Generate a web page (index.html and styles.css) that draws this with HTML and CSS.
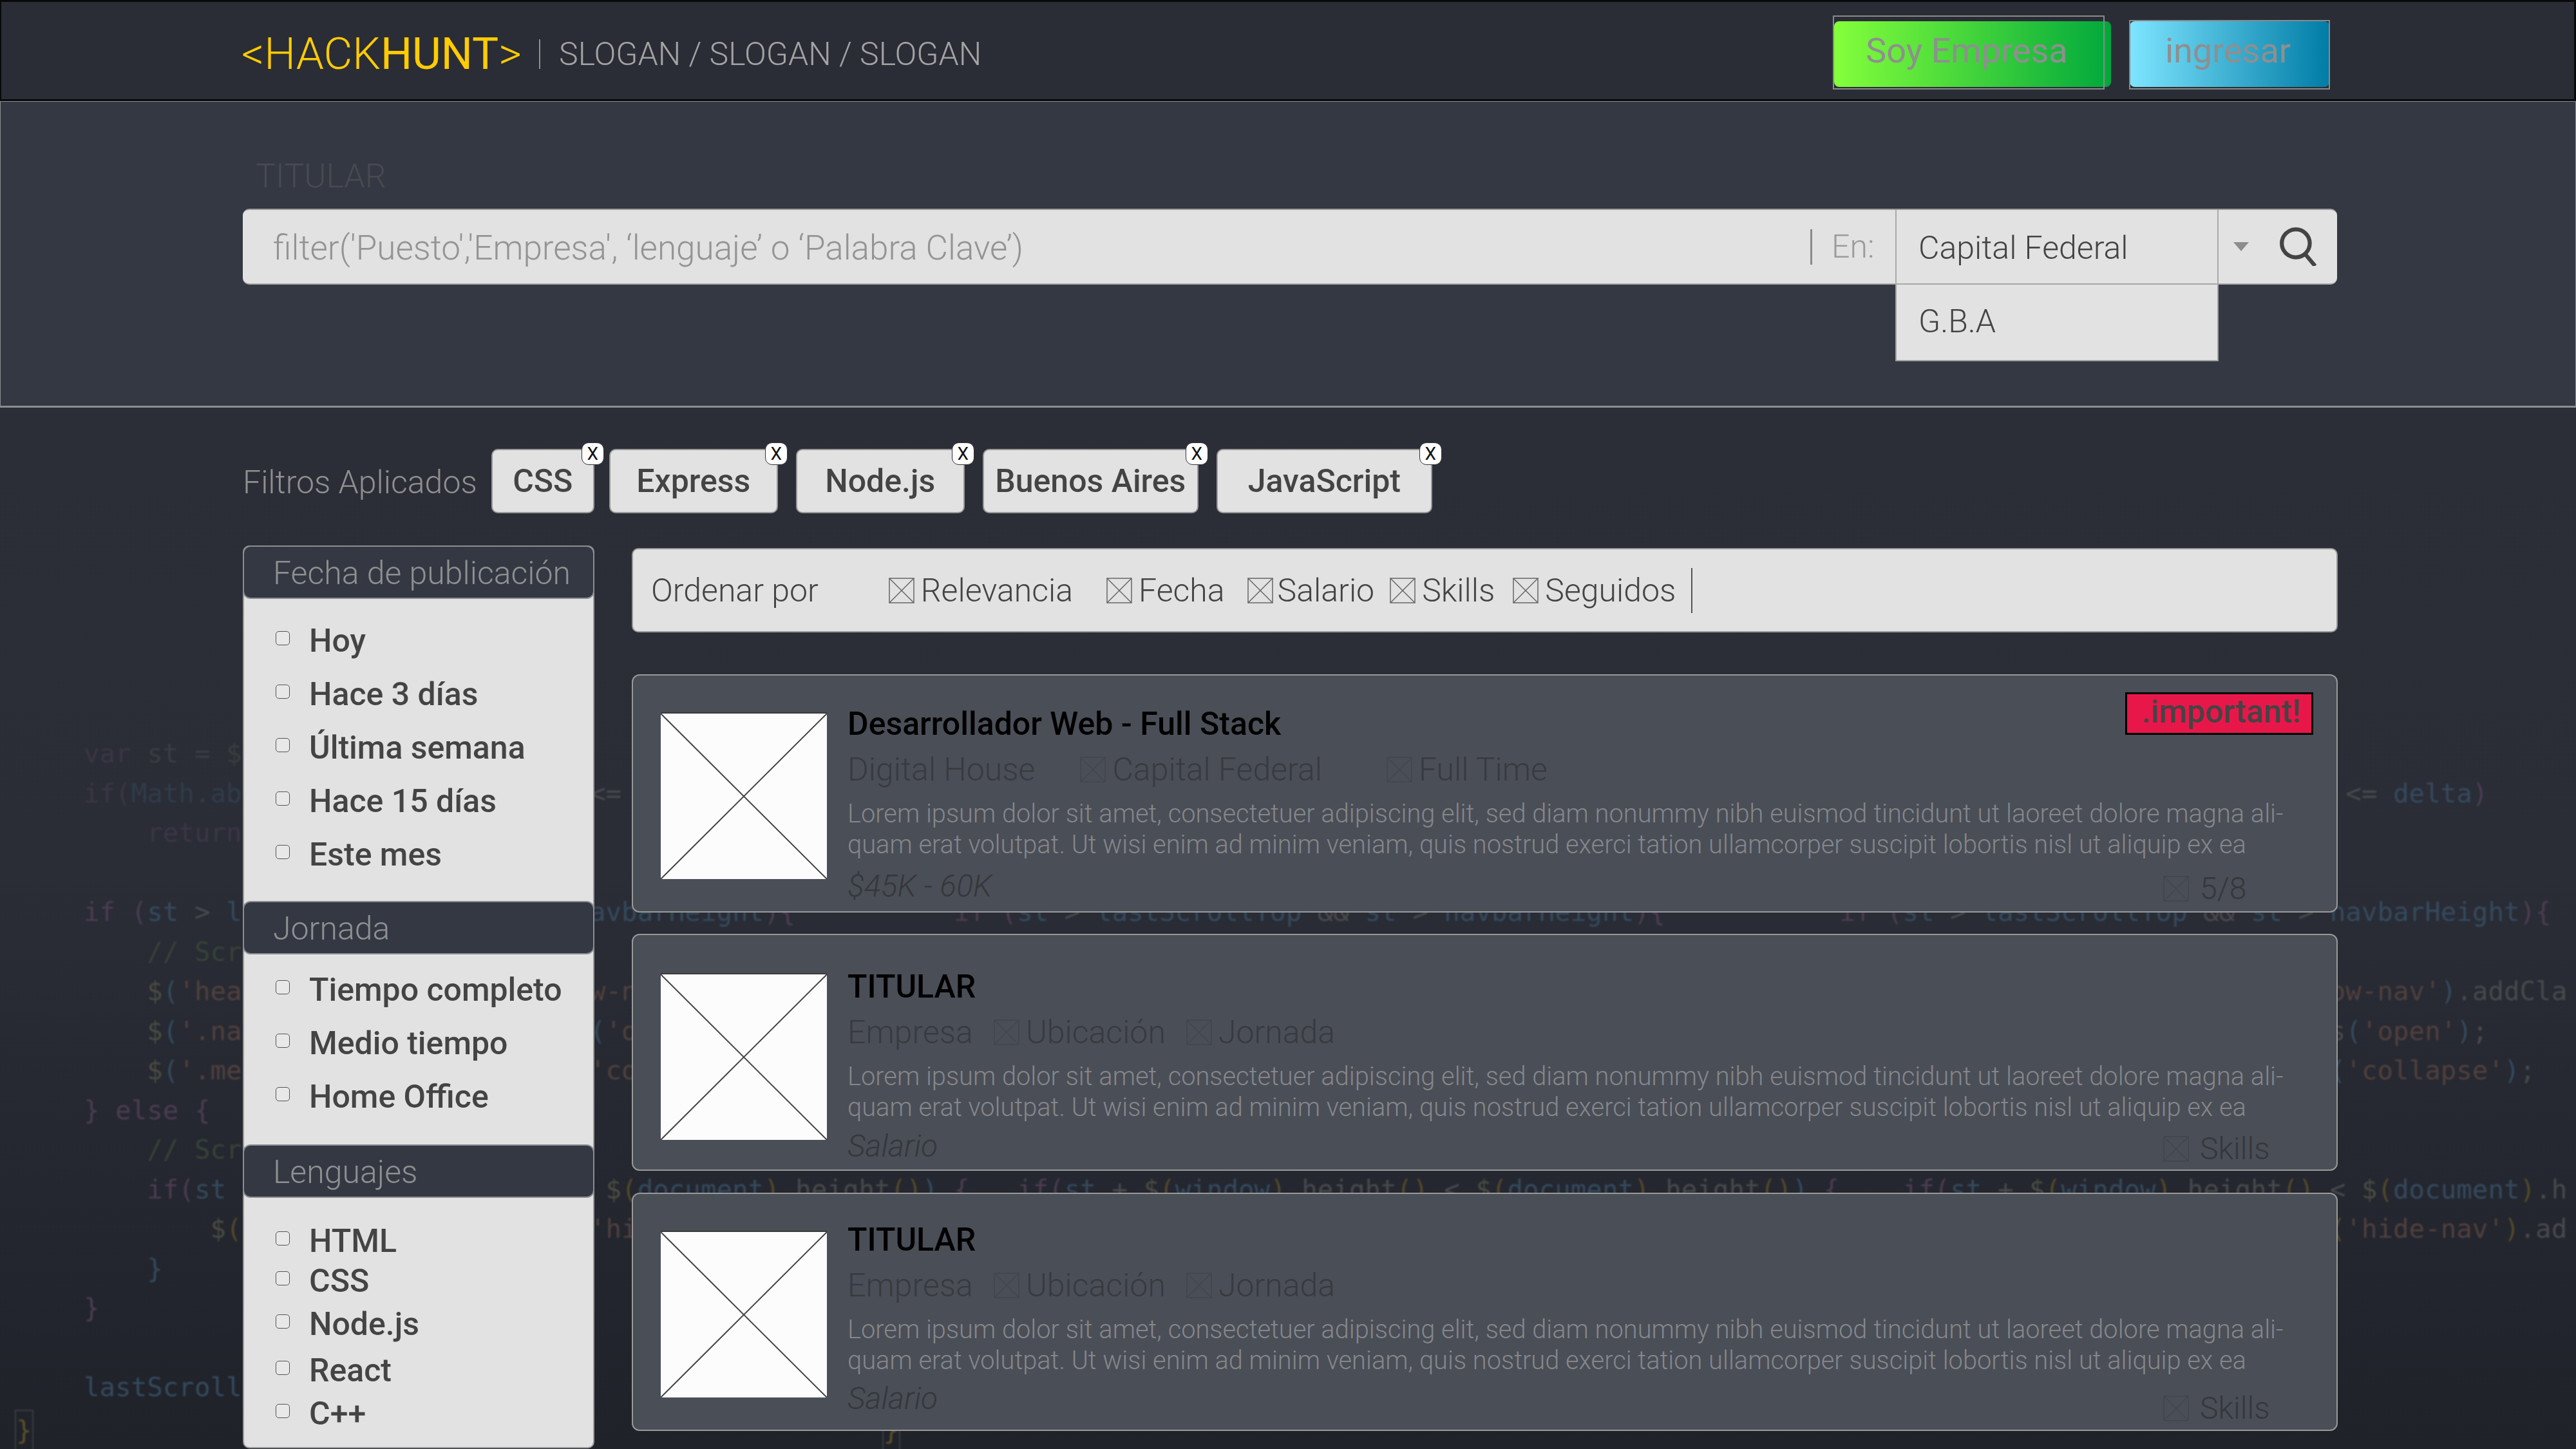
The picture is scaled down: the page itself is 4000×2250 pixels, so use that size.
FILE: index.html
```html
<!DOCTYPE html>
<html lang="es">
<head>
  <meta charset="UTF-8" />
  <title>HackHunt</title>
  <link rel="stylesheet" href="styles.css">
</head>
<body>

<svg class="defs" width="0" height="0">
  <symbol id="xbox" viewBox="0 0 40 40" preserveAspectRatio="none">
    <rect x="1" y="1" width="38" height="38" fill="none" stroke="currentColor" stroke-width="1.5" vector-effect="non-scaling-stroke"/>
    <path d="M1 1L39 39M39 1L1 39" fill="none" stroke="currentColor" stroke-width="1.5" vector-effect="non-scaling-stroke"/>
  </symbol>
  <symbol id="xlines" viewBox="0 0 40 40" preserveAspectRatio="none">
    <path d="M0 0L40 40M40 0L0 40" fill="none" stroke="currentColor" stroke-width="2" vector-effect="non-scaling-stroke"/>
  </symbol>
</svg>

<header class="topbar">
  <div class="logo">&lt;HACK<span class="logo-bold">HUNT</span>&gt;</div>
  <div class="slogan">SLOGAN / SLOGAN / SLOGAN</div>
  <a class="btn btn-green">Soy Empresa</a>
  <a class="btn btn-blue">ingresar</a>
</header>

<section class="hero">
  <div class="hero-title">TITULAR</div>
  <div class="searchbar">
    <div class="search-text">filter('Puesto','Empresa', ‘lenguaje’ o ‘Palabra Clave’)</div>
    <div class="search-en">En:</div>
    <div class="search-select">
      Capital Federal
      <div class="dropdown">G.B.A</div>
    </div>
    <div class="search-caret"></div>
    <svg class="search-icon" viewBox="0 0 56 58">
      <circle cx="24" cy="24" r="21" fill="none" stroke="#444" stroke-width="6"/>
      <path d="M38 40L53 58" fill="none" stroke="#444" stroke-width="6"/>
    </svg>
  </div>
</section>

<main class="page">
  <!-- codigo de fondo: solo lo que asoma entre las columnas -->
  <pre class="code"><div class="code-line dim"><span class="l"><b class="k">var</b> st = <b class="f">$</b></span></div><div class="code-line"><span class="l dim"><b class="k">if(</b><b class="v">Math.ab</b></span><span class="m">&lt;=</span><span class="r"> &lt;= <b class="v">delta</b><b class="k">)</b></span></div><div class="code-line dim"><span class="l">    <b class="k">return</b></span></div><div class="code-line"> </div><div class="code-line"><span class="l"><b class="k">if (</b><b class="v">st</b> &gt; <b class="v">l</b></span><span class="tail"><b class="v">avbarHeight</b><b class="k">){</b></span><span class="col-b"><b class="k">if (</b><b class="v">st</b> &gt; <b class="v">lastScrollTop</b> &amp;&amp; <b class="v">st</b> &gt; <b class="v">navbarHeight</b><b class="k">){</b></span><span class="col-c"><b class="k">if (</b><b class="v">st</b> &gt; <b class="v">lastScrollTop</b> &amp;&amp; <b class="v">st</b> &gt; <b class="v">navbarHeight</b><b class="k">){</b></span></div><div class="code-line"><span class="l">    <b class="c">// Scr</b></span></div><div class="code-line"><span class="l">    <b class="f">$</b><b class="v">(</b><b class="s">'hea</b></span><span class="m"><b class="s">w-n</b></span><span class="r"><b class="s">ow-nav'</b><b class="v">)</b>.addCla</span></div><div class="code-line"><span class="l">    <b class="f">$</b><b class="v">(</b><b class="s">'.na</b></span><span class="m"><b class="v">(</b><b class="s">'o</b></span><span class="r">s<b class="v">(</b><b class="s">'open'</b><b class="v">)</b>;</span></div><div class="code-line"><span class="l">    <b class="f">$</b><b class="v">(</b><b class="s">'.me</b></span><span class="m"><b class="s">'co</b></span><span class="r"><b class="v">(</b><b class="s">'collapse'</b><b class="v">)</b>;</span></div><div class="code-line"><span class="l"><b class="k">} else {</b></span></div><div class="code-line"><span class="l">    <b class="c">// Scr</b></span></div><div class="code-line"><span class="l">    <b class="k">if(</b><b class="v">st</b></span><span class="w27"> <b class="f">$</b><b class="y">(</b><b class="v">document</b><b class="y">)</b>.height<b class="y">()</b><b class="v">)</b> <b class="k">{</b></span><span class="col-b"><b class="k">if(</b><b class="v">st</b> + <b class="f">$</b><b class="y">(</b><b class="v">window</b><b class="y">)</b>.height<b class="y">()</b> &lt; <b class="f">$</b><b class="y">(</b><b class="v">document</b><b class="y">)</b>.height<b class="y">()</b><b class="v">)</b> <b class="k">{</b></span><span class="col-c"><b class="k">if(</b><b class="v">st</b> + <b class="f">$</b><b class="y">(</b><b class="v">window</b><b class="y">)</b>.height<b class="y">()</b> &lt; <b class="f">$</b><b class="y">(</b><b class="v">document</b><b class="y">)</b>.h</span></div><div class="code-line"><span class="l">        <b class="f">$</b><b class="y">(</b></span><span class="m"><b class="s">'hi</b></span><span class="r"><b class="y">(</b><b class="s">'hide-nav'</b><b class="y">)</b>.ad</span></div><div class="code-line"><span class="l">    <b class="v">}</b></span></div><div class="code-line"><span class="l"><b class="k">}</b></span></div><div class="code-line"> </div><div class="code-line"><span class="l"><b class="v">lastScroll</b></span></div><div class="code-end"><span class="brace">}</span><span class="brace">}</span></div></pre>

  <div class="content">
    <div class="filters">
      <span class="filters-label">Filtros Aplicados</span>
      <span class="chip chip-sm">CSS<i class="chip-x">X</i></span>
      <span class="chip chip-md">Express<i class="chip-x">X</i></span>
      <span class="chip chip-md">Node.js<i class="chip-x">X</i></span>
      <span class="chip chip-lg">Buenos Aires<i class="chip-x">X</i></span>
      <span class="chip chip-lg">JavaScript<i class="chip-x">X</i></span>
    </div>

    <div class="columns">
      <aside class="sidebar">
        <h3 class="side-head">Fecha de publicación</h3>
        <ul class="side-list side-fecha">
          <li><i class="check"></i>Hoy</li>
          <li><i class="check"></i>Hace 3 días</li>
          <li><i class="check"></i>Última semana</li>
          <li><i class="check"></i>Hace 15 días</li>
          <li><i class="check"></i>Este mes</li>
        </ul>
        <h3 class="side-head">Jornada</h3>
        <ul class="side-list side-jornada">
          <li><i class="check"></i>Tiempo completo</li>
          <li><i class="check"></i>Medio tiempo</li>
          <li><i class="check"></i>Home Office</li>
        </ul>
        <h3 class="side-head">Lenguajes</h3>
        <ul class="side-list side-lang">
          <li><i class="check"></i>HTML</li>
          <li><i class="check"></i>CSS</li>
          <li><i class="check"></i>Node.js</li>
          <li><i class="check"></i>React</li>
          <li><i class="check"></i>C++</li>
        </ul>
      </aside>

      <div class="results">
        <div class="sortbar">
          <span class="sort-label">Ordenar por</span>
          <span class="sort-opt"><svg class="xbox"><use href="#xbox"/></svg>Relevancia</span>
          <span class="sort-opt"><svg class="xbox"><use href="#xbox"/></svg>Fecha</span>
          <span class="sort-opt"><svg class="xbox"><use href="#xbox"/></svg>Salario</span>
          <span class="sort-opt"><svg class="xbox"><use href="#xbox"/></svg>Skills</span>
          <span class="sort-opt"><svg class="xbox"><use href="#xbox"/></svg>Seguidos</span>
          <span class="sort-sep"></span>
        </div>

        <article class="card card-a">
          <svg class="thumb"><use href="#xlines"/></svg>
          <div class="card-body">
            <h2 class="card-title">Desarrollador Web - Full Stack</h2>
            <div class="card-meta meta-wide">
              <span>Digital House</span>
              <span class="meta-item"><svg class="xbox"><use href="#xbox"/></svg>Capital Federal</span>
              <span class="meta-item"><svg class="xbox"><use href="#xbox"/></svg>Full Time</span>
            </div>
            <p class="card-text">Lorem ipsum dolor sit amet, consectetuer adipiscing elit, sed diam nonummy nibh euismod tincidunt ut laoreet dolore magna ali-<br>quam erat volutpat. Ut wisi enim ad minim veniam, quis nostrud exerci tation ullamcorper suscipit lobortis nisl ut aliquip ex ea</p>
            <div class="card-foot">
              <em>$45K - 60K</em>
              <span class="skills"><svg class="xbox"><use href="#xbox"/></svg>5/8</span>
            </div>
          </div>
          <div class="badge">.important!</div>
        </article>

        <article class="card card-b">
          <svg class="thumb"><use href="#xlines"/></svg>
          <div class="card-body">
            <h2 class="card-title">TITULAR</h2>
            <div class="card-meta">
              <span>Empresa</span>
              <span class="meta-item"><svg class="xbox"><use href="#xbox"/></svg>Ubicación</span>
              <span class="meta-item"><svg class="xbox"><use href="#xbox"/></svg>Jornada</span>
            </div>
            <p class="card-text">Lorem ipsum dolor sit amet, consectetuer adipiscing elit, sed diam nonummy nibh euismod tincidunt ut laoreet dolore magna ali-<br>quam erat volutpat. Ut wisi enim ad minim veniam, quis nostrud exerci tation ullamcorper suscipit lobortis nisl ut aliquip ex ea</p>
            <div class="card-foot">
              <em>Salario</em>
              <span class="skills"><svg class="xbox"><use href="#xbox"/></svg>Skills</span>
            </div>
          </div>
        </article>

        <article class="card card-c">
          <svg class="thumb"><use href="#xlines"/></svg>
          <div class="card-body">
            <h2 class="card-title">TITULAR</h2>
            <div class="card-meta">
              <span>Empresa</span>
              <span class="meta-item"><svg class="xbox"><use href="#xbox"/></svg>Ubicación</span>
              <span class="meta-item"><svg class="xbox"><use href="#xbox"/></svg>Jornada</span>
            </div>
            <p class="card-text">Lorem ipsum dolor sit amet, consectetuer adipiscing elit, sed diam nonummy nibh euismod tincidunt ut laoreet dolore magna ali-<br>quam erat volutpat. Ut wisi enim ad minim veniam, quis nostrud exerci tation ullamcorper suscipit lobortis nisl ut aliquip ex ea</p>
            <div class="card-foot">
              <em>Salario</em>
              <span class="skills"><svg class="xbox"><use href="#xbox"/></svg>Skills</span>
            </div>
          </div>
        </article>
      </div>
    </div>
  </div>
</main>

</body>
</html>
```

FILE: styles.css
```css
body {
  margin: 0;
  height: 2250px;
  overflow: hidden;
  font-family: Roboto, sans-serif;
  background: #2b2e37;
}
h2, h3, p, ul {
  margin: 0;
  padding: 0;
  font-weight: normal;
}
ul {
  list-style: none;
}
i, em {
  font-style: normal;
}
.defs {
  display: block;
  height: 0;
}

/* Barra de arriba */
.topbar {
  box-sizing: border-box;
  height: 157px;
  display: flex;
  align-items: center;
  padding: 10px 0 0 373px;
  background: #2a2d36;
  border: 3px solid #08090b;
  border-width: 3px 3px 3px 2px;
}
.logo {
  font-size: 69px;
  font-weight: 300;
  color: #ffcc00;
  padding-right: 26px;
  width: 436px;
  white-space: nowrap;
}
.logo-bold {
  font-weight: 400;
}
.slogan {
  font-size: 50px;
  font-weight: 300;
  color: #a3a3a3;
  padding-left: 29px;
  line-height: 46px;
  border-left: 2px solid #8d8d8d;
  white-space: nowrap;
}
.btn {
  position: relative;
  box-sizing: border-box;
  height: 102px;
  border-radius: 8px;
  font-size: 54px;
  color: #8f8f8f;
  display: flex;
  align-items: center;
  justify-content: center;
  padding-bottom: 10px;
}
.btn::after {
  content: "";
  position: absolute;
  border: 2px solid #8a8a8a;
}
.btn-green {
  width: 430px;
  margin-left: auto;
  margin-right: 29px;
  padding-right: 18px;
  background: linear-gradient(90deg, #84ff3b, #00a83c);
}
.btn-green::after {
  top: -9px;
  left: -2px;
  right: 10px;
  bottom: -4px;
}
.btn-blue {
  width: 310px;
  margin-right: 380px;
  padding-right: 5px;
  background: linear-gradient(90deg, #7ee5ff, #007ca6);
}
.btn-blue::after {
  top: -2px;
  left: -1px;
  right: -1px;
  bottom: -4px;
}

/* Buscador */
.hero {
  box-sizing: border-box;
  height: 476px;
  padding: 79px 370px 0 376px;
  background: #343842;
  border: 2px solid #8b8d91;
  border-width: 1px 1px 3px 1px;
}
.hero-title {
  font-size: 52px;
  font-weight: 300;
  line-height: 74px;
  margin-bottom: 13px;
  color: #484a50;
  padding-left: 20px;
}
.searchbar {
  box-sizing: border-box;
  height: 118px;
  display: flex;
  align-items: center;
  background: #e2e2e2;
  border-radius: 10px;
  border-top: 2px solid #9a9a9a;
  border-bottom: 2px solid #a8a8a8;
}
.search-text {
  flex: 1;
  padding: 3px 0 0 47px;
  font-size: 53px;
  font-weight: 300;
  color: #949494;
}
.search-en {
  font-size: 50px;
  font-weight: 300;
  color: #9c9c9c;
  width: 132px;
  box-sizing: border-box;
  padding-left: 30px;
  line-height: 55px;
  border-left: 3px solid #8a8a8a;
}
.search-select {
  position: relative;
  box-sizing: border-box;
  width: 502px;
  height: 100%;
  display: flex;
  align-items: center;
  padding: 3px 0 0 34px;
  font-size: 50px;
  font-weight: 300;
  color: #444;
  border-left: 2px solid #aaa;
  border-right: 2px solid #aaa;
}
.dropdown {
  position: absolute;
  top: 116px;
  left: -2px;
  right: -2px;
  height: 119px;
  box-sizing: border-box;
  padding: 28px 0 0 34px;
  background: #e2e2e2;
  border: 2px solid #a0a0a0;
  border-top: 0;
}
.search-caret {
  margin-left: 23px;
  margin-right: 47px;
  width: 0;
  border-top: 14px solid #8d8d8d;
  border-left: 12px solid transparent;
  border-right: 12px solid transparent;
}
.search-icon {
  width: 60px;
  height: 60px;
  margin-right: 30px;
}

/* Fondo con codigo */
.page {
  display: grid;
  background: linear-gradient(180deg, #2b2e37 0%, #2a2d36 45%, #1f2229 100%);
  height: 1617px;
}
.code {
  grid-area: 1 / 1;
  margin: 0;
  padding: 507px 0 0 130px;
  overflow: hidden;
  font-family: "DejaVu Sans Mono", monospace;
  font-size: 40.8px;
  line-height: 61.5px;
  color: #484a4c;
  filter: blur(1px);
}
.code b {
  font-weight: normal;
}
.code-line {
  display: flex;
  height: 61.5px;
  white-space: pre;
}
.code-end {
  display: flex;
  gap: 1322px;
  margin: 5px 0 0 -105px;
}
.brace {
  color: #5c5028;
  outline: 2px solid #3a3d43;
}
.dim {
  opacity: 0.55;
}
.l {
  width: 32ch;
  flex: none;
}
.m {
  width: 110ch;
  flex: none;
}
.tail {
  width: 23ch;
  flex: none;
}
.w27 {
  width: 27ch;
  flex: none;
}
.col-b {
  width: 56ch;
  flex: none;
}
.col-c {
  flex: none;
}
.k { color: #4c3c52; }
.v { color: #354a5e; }
.s { color: #51403d; }
.c { color: #364436; }
.f { color: #4a4d42; }
.y { color: #54492c; }

.content {
  position: relative;
  z-index: 1;
  grid-area: 1 / 1;
  padding: 64px 370px 0 377px;
  min-width: 0;
}

/* Filtros */
.filters {
  display: flex;
  align-items: center;
  gap: 28px;
  height: 100px;
  margin-bottom: 50px;
}
.filters-label {
  padding-top: 4px;
  font-size: 50px;
  font-weight: 300;
  color: #8f8f8f;
  margin-right: -6px;
}
.chip {
  position: relative;
  box-sizing: border-box;
  height: 100px;
  display: flex;
  align-items: center;
  justify-content: center;
  background: #e2e2e2;
  border: 2px solid #999;
  border-radius: 10px;
  font-size: 50px;
  font-weight: 500;
  color: #444;
}
.chip-sm { width: 160px; margin-right: -5px; }
.chip-md { width: 262px; }
.chip-lg { width: 335px; }
.chip-x {
  position: absolute;
  top: -12px;
  right: -17px;
  box-sizing: border-box;
  width: 35px;
  height: 35px;
  display: flex;
  align-items: center;
  justify-content: center;
  font-size: 28px;
  font-weight: 400;
  color: #111;
  background: #fff;
  border: 1px solid #333;
  border-radius: 11px;
}

.columns {
  display: flex;
  gap: 58px;
  align-items: flex-start;
}

/* Columna de filtros */
.sidebar {
  box-sizing: border-box;
  width: 546px;
  height: 1402px;
  background: #e2e2e2;
  border: 2px solid #999;
  border-radius: 10px;
}
.side-head {
  box-sizing: border-box;
  height: 83px;
  margin: -2px -2px 0;
  padding: 3px 0 0 45px;
  display: flex;
  align-items: center;
  background: #343842;
  border: 2px solid #8b8d91;
  border-radius: 12px;
  font-size: 50px;
  font-weight: 300;
  color: #8f9092;
}
.side-list {
  font-size: 50px;
  font-weight: 500;
  color: #444;
}
.side-list li {
  height: 83px;
  display: flex;
  align-items: center;
}
.side-fecha { padding: 23px 0 33px; }
.side-jornada { padding: 13px 0 35px; }
.side-lang { padding: 33px 0 0; }
.side-lang li { height: 67px; }
.side-lang li:nth-child(1) { margin-bottom: -5px; }
.side-lang li:nth-child(3) { margin-bottom: 5px; }
.check {
  box-sizing: border-box;
  width: 22px;
  height: 22px;
  margin: -8px 30px 0 49px;
  background: #e8e8e8;
  border: 1px solid #555;
  border-radius: 5px;
}

/* Resultados */
.results {
  flex: 1;
  min-width: 0;
  padding-top: 4px;
}
.sortbar {
  box-sizing: border-box;
  height: 131px;
  margin-bottom: 65px;
  display: flex;
  align-items: center;
  padding-left: 28px;
  background: #e2e2e2;
  border: 2px solid #999;
  border-radius: 10px;
  font-size: 50px;
  font-weight: 300;
  color: #444;
}
.sort-label {
  margin-right: 109px;
}
.sort-opt {
  display: flex;
  align-items: center;
  margin-right: 28px;
}
.sort-opt:nth-child(2) { margin-right: 52px; }
.sort-opt:nth-child(3) { margin-right: 35px; }
.sort-opt:nth-child(4) { margin-right: 24px; }
.sort-opt:nth-child(4) .xbox { margin-right: 7px; }
.xbox {
  width: 40px;
  height: 40px;
  margin-right: 10px;
  flex: none;
  color: #666;
}
.sort-sep {
  width: 2px;
  height: 70px;
  margin-left: -4px;
  background: #555;
}

.card {
  position: relative;
  box-sizing: border-box;
  height: 370px;
  margin-bottom: 33px;
  display: flex;
  padding: 57px 0 0 43px;
  background: #4a4e57;
  border: 2px solid #999;
  border-radius: 12px;
}
.card-b {
  height: 368px;
  margin-bottom: 34px;
}
.thumb {
  flex: none;
  box-sizing: border-box;
  width: 258px;
  height: 259px;
  background: #fcfcfc;
  color: #444;
  border-top: 2px solid #3a3a3a;
}
.card-b .thumb {
  margin-top: 2px;
}
.card-body {
  flex: 1;
  min-width: 0;
  padding-left: 32px;
}
.card-title {
  font-size: 50px;
  font-weight: 500;
  line-height: 50px;
  color: #000;
}
.card-a .card-title { margin-top: -7px; }
.card-b .card-title { margin-top: -2px; }
.card-c .card-title { margin-top: -11px; }
.card-meta {
  display: flex;
  gap: 32px;
  margin-top: 11px;
  font-size: 50px;
  font-weight: 300;
  line-height: 70px;
  color: #383a3f;
}
.meta-wide {
  gap: 70px;
}
.meta-wide .meta-item + .meta-item {
  margin-left: 30px;
}
.meta-item {
  display: flex;
  align-items: center;
}
.meta-item .xbox, .skills .xbox {
  color: #42464f;
}
.card-text {
  margin-top: 10px;
  font-size: 39.8px;
  font-weight: 300;
  line-height: 47.5px;
  color: #85878a;
  white-space: nowrap;
}
.card-foot {
  display: flex;
  justify-content: space-between;
  font-size: 48px;
  font-weight: 300;
  line-height: 56px;
  color: #35373b;
}
.card-a .card-foot { margin-top: 13px; }
.card-b .card-foot { margin-top: 9px; }
.card-c .card-foot { margin-top: 8px; }
.card-foot em {
  font-style: italic;
}
.skills {
  width: 269px;
  display: flex;
  align-items: center;
  margin-top: 4px;
}
.skills .xbox {
  margin-right: 17px;
}
.card-c .skills {
  margin-top: 15px;
}
.badge {
  position: absolute;
  top: 26px;
  right: 36px;
  box-sizing: border-box;
  width: 292px;
  height: 66px;
  padding: 0 16px 6px 0;
  display: flex;
  align-items: center;
  justify-content: flex-end;
  background: #e8174a;
  border: 3px solid #000;
  font-size: 50px;
  font-weight: 500;
  color: #444;
}
```
